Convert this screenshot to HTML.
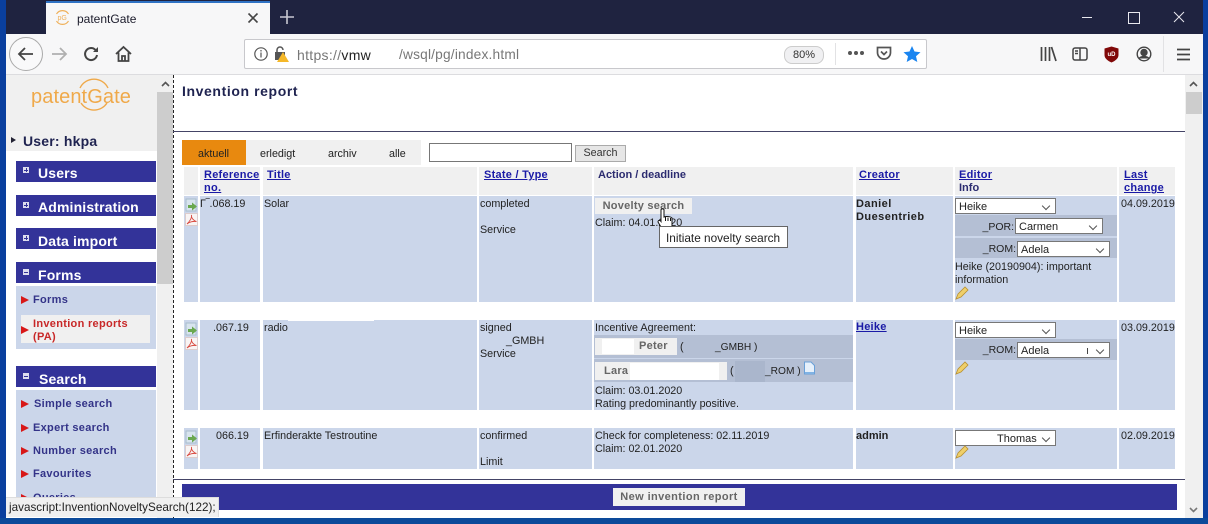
<!DOCTYPE html>
<html><head><meta charset="utf-8"><style>
html,body{margin:0;padding:0}
body{width:1208px;height:524px;overflow:hidden;position:relative;background:#fff;font-family:"Liberation Sans",sans-serif;font-size:10px;color:#222}
.a{position:absolute;white-space:nowrap}
.c{position:absolute;background:#cbd6ea}
.h{position:absolute;background:#f0f0f0;top:167px;height:28px}
a,.lk{color:#1a1aa6;text-decoration:underline;font-weight:bold;font-size:11px;line-height:13px;letter-spacing:.25px;margin-top:1px}
.th{color:#2c2c70;font-weight:bold;font-size:11px;line-height:13px;margin-top:1px}
.t{position:absolute;white-space:nowrap;font-size:10.75px;line-height:13px;color:#222;margin-top:1px}
.bar{position:absolute;left:16px;width:140px;height:21px;background:#333399;color:#fff;font-weight:bold;font-size:14px;line-height:14px;letter-spacing:.15px}
.bar span{position:absolute;left:22px;top:5px}
.bar i{position:absolute;left:7px;top:7px;width:6px;height:6px;background:#dde;display:block}
.bar i:after{content:"";position:absolute;left:1px;top:2.5px;width:4px;height:1px;background:#333399}
.bar i.p:before{content:"";position:absolute;left:2.5px;top:1px;width:1px;height:4px;background:#333399}
.m{position:absolute;font-size:11px;font-weight:bold;color:#333388;white-space:nowrap;letter-spacing:.3px;margin-top:1px}
.tri{position:absolute;left:21px;width:0;height:0;border-left:8px solid #d81818;border-top:4px solid transparent;border-bottom:4px solid transparent;margin-top:1px}
.sel{position:absolute;background:#fff;border:1px solid #777;box-sizing:border-box;height:16px;font-size:11px;line-height:16px;color:#222;padding-left:3px;white-space:nowrap}
.sel:after{content:"";position:absolute;right:6px;top:4px;width:5px;height:5px;border-right:1px solid #555;border-bottom:1px solid #555;transform:rotate(45deg)}
.g{position:absolute;background:#b4bfd4}
.btn{position:absolute;background:#f0f0f0;font-weight:bold;font-size:11px;color:#666;text-align:center;white-space:nowrap;letter-spacing:.25px}
</style></head><body>
<!-- window frame -->
<div class="a" style="left:0;top:0;width:1208px;height:524px;background:#0a3f9e"></div>
<div class="a" style="left:6px;top:0;width:1197px;height:34px;background:#1f2340"></div>
<div class="a" style="left:0;top:518px;width:1208px;height:6px;background:#0c4a9a"></div>
<!-- tab -->
<div class="a" style="left:46px;top:1px;width:224px;height:33px;background:#f7f7f8;border-top:2px solid #2f72c4;box-sizing:border-box"></div>
<svg class="a" style="left:54px;top:9px" width="17" height="17" viewBox="0 0 17 17" fill="none" stroke="#efb05a" stroke-width="1.2"><path d="M2.5 5A7 7 0 0 1 14.5 5M2.5 12A7 7 0 0 0 14.5 12"/><text x="3.5" y="11" font-size="7" font-family="Liberation Sans" fill="#efb05a" stroke="none">pG</text></svg>
<div class="a" style="left:77px;top:12px;font-size:12px;color:#1a1a2a">patentGate</div>
<svg class="a" style="left:247px;top:12px" width="12" height="12" stroke="#444" stroke-width="1.6"><path d="M1.5 1.5L10.5 10.5M10.5 1.5L1.5 10.5"/></svg>
<svg class="a" style="left:279px;top:9px" width="16" height="16" stroke="#c8c8d2" stroke-width="1.6"><path d="M8 1V15M1 8H15"/></svg>
<!-- window buttons -->
<div class="a" style="left:1082px;top:17px;width:10px;height:1px;background:#e8e8ee"></div>
<div class="a" style="left:1128px;top:12px;width:10px;height:10px;border:1px solid #e8e8ee"></div>
<svg class="a" style="left:1173px;top:11px" width="12" height="12" stroke="#e8e8ee" stroke-width="1"><path d="M1 1L11 11M11 1L1 11"/></svg>
<!-- toolbar -->
<div class="a" style="left:6px;top:34px;width:1197px;height:41px;background:#f7f7f8;border-bottom:1px solid #dcdcdf;box-sizing:border-box"></div>
<svg class="a" style="left:8px;top:36px" width="36" height="36" fill="none"><circle cx="18" cy="18" r="16.5" fill="#f9f9fa" stroke="#aaa"/><path d="M25 18H11M17 12L11 18L17 24" stroke="#444" stroke-width="1.8"/></svg>
<svg class="a" style="left:50px;top:46px" width="18" height="16" fill="none" stroke="#b0b0b0" stroke-width="1.8"><path d="M2 8H16M10 2L16 8L10 14"/></svg>
<svg class="a" style="left:83px;top:46px" width="17" height="16" fill="none" stroke="#444" stroke-width="2"><path d="M14 9A6 6 0 1 1 12 3.5L14.5 5.5"/><path d="M15 1V6H10" fill="#444" stroke="none"/></svg>
<svg class="a" style="left:115px;top:45px" width="17" height="18" fill="none" stroke="#444" stroke-width="1.8"><path d="M1 9L8.5 2L16 9M3.5 7.5V16H13.5V7.5M7 16V11H10V16"/></svg>
<!-- urlbar -->
<div class="a" style="left:244px;top:39px;width:683px;height:30px;background:#fff;border:1px solid #c8c8cc;border-radius:2px;box-sizing:border-box"></div>
<svg class="a" style="left:253px;top:46px" width="17" height="15" fill="none" stroke="#555" stroke-width="1.2"><circle cx="8" cy="8" r="6.2"/><path d="M8 6.5V11.5M8 4V5.5"/></svg>
<svg class="a" style="left:274px;top:46px" width="16" height="17"><rect x="1" y="6" width="10" height="8" fill="#555"/><path d="M3 6V4A3 3 0 0 1 9 4" fill="none" stroke="#555" stroke-width="1.5"/><path d="M9 6L15 16H3Z" fill="#f5b829"/></svg>
<div class="a" style="left:297px;top:47px;font-size:14px;color:#777;letter-spacing:.3px">https://<span style="color:#222">vmw</span></div>
<div class="a" style="left:399px;top:47px;font-size:13.7px;color:#777;letter-spacing:.2px">/wsql/pg/index.html</div>
<div class="a" style="left:784px;top:46px;width:38px;height:16px;border:1px solid #ccc;background:#f0f0f2;border-radius:8px;font-size:11px;line-height:16px;text-align:center;color:#333">80%</div>
<div class="a" style="left:835px;top:43px;width:1px;height:22px;background:#e2e2e4"></div>
<svg class="a" style="left:847px;top:50px" width="18" height="6" fill="#555"><circle cx="3" cy="3" r="2"/><circle cx="9" cy="3" r="2"/><circle cx="15" cy="3" r="2"/></svg>
<svg class="a" style="left:876px;top:46px" width="16" height="15" fill="none" stroke="#555" stroke-width="1.7"><path d="M1.5 1.5H14.5V6.5A6.5 6.5 0 0 1 1.5 6.5Z"/><path d="M5 5.5L8 8.5L11 5.5"/></svg>
<svg class="a" style="left:903px;top:45px" width="18" height="18" fill="#1a85f0"><path d="M9 1L11.5 6.5L17.5 7.2L13 11.2L14.3 17L9 14L3.7 17L5 11.2L.5 7.2L6.5 6.5Z"/></svg>
<svg class="a" style="left:1040px;top:46px" width="17" height="16" fill="none" stroke="#444" stroke-width="1.7"><path d="M1.5 1V15M5.5 1V15M9.5 1V15M11.5 1L16 15"/></svg>
<svg class="a" style="left:1072px;top:47px" width="16" height="14" fill="none" stroke="#444" stroke-width="1.5"><rect x="1" y="1" width="14" height="12" rx="2"/><path d="M8 1V13M3 4H6M3 6.5H6"/></svg>
<svg class="a" style="left:1104px;top:46px" width="15" height="17"><path d="M7.5 .5L14.5 2.5V9C14.5 12.5 11 15 7.5 16.5C4 15 .5 12.5 .5 9V2.5Z" fill="#800808"/><text x="7.5" y="10" font-size="6" font-weight="bold" font-family="Liberation Sans" text-anchor="middle" fill="#fff">uD</text></svg>
<svg class="a" style="left:1136px;top:46px" width="16" height="16" fill="none" stroke="#444" stroke-width="1.4"><circle cx="8" cy="8" r="6.8"/><circle cx="8" cy="6.5" r="3" fill="#444"/><path d="M3 12.5C5 10 11 10 13 12.5" fill="#444"/></svg>
<div class="a" style="left:1163px;top:36px;width:1px;height:36px;background:#e2e2e4"></div>
<svg class="a" style="left:1177px;top:48px" width="13" height="13" stroke="#444" stroke-width="1.7"><path d="M0 1.5H13M0 6.5H13M0 11.5H13"/></svg>
<!-- content background -->
<div class="a" style="left:6px;top:75px;width:1197px;height:443px;background:#fff"></div>
<!-- sidebar -->
<div class="a" style="left:6px;top:75px;width:151px;height:76px;background:#f0f0f0"></div>
<div class="a" style="left:157px;top:75px;width:16px;height:443px;background:#f0f0f0"></div>
<div class="a" style="left:157px;top:92px;width:16px;height:192px;background:#cdcdcd"></div>
<svg class="a" style="left:161px;top:81px" width="9" height="6" fill="none" stroke="#555" stroke-width="1.6"><path d="M1 5L4.5 1.5L8 5"/></svg>
<div class="a" style="left:173px;top:75px;width:0;height:443px;border-left:1px dashed #222"></div>
<div class="a" style="left:31px;top:86px;font-size:20px;line-height:22px;color:#efa94a;letter-spacing:.1px">patentGate</div>
<svg class="a" style="left:70px;top:78px" width="48" height="36" fill="none" stroke="#efa94a" stroke-width="1.4"><path d="M10 10A15.500 15.500 0 0 1 38 10M11 25A15.500 15.500 0 0 0 37 25"/></svg>
<div class="a" style="left:11px;top:137px;width:0;height:0;border-left:5px solid #223;border-top:3px solid transparent;border-bottom:3px solid transparent"></div>
<div class="a" style="left:23px;top:134px;font-size:14px;line-height:15px;font-weight:bold;color:#1f2350;letter-spacing:.2px">User: hkpa</div>
<div class="bar" style="top:161px"><i class="p" style="top:6px"></i><span>Users</span></div>
<div class="bar" style="top:195px"><i class="p"></i><span>Administration</span></div>
<div class="bar" style="top:228px"><i class="p"></i><span style="top:6px">Data import</span></div>
<div class="bar" style="top:262px"><i></i><span style="top:6px">Forms</span></div>
<div class="a" style="left:16px;top:286px;width:140px;height:63px;background:#cbd6ea"></div>
<div class="a" style="left:21px;top:315px;width:129px;height:28px;background:#f0f0f0"></div>
<div class="tri" style="top:295px"></div><div class="m" style="left:33px;top:293px">Forms</div>
<div class="tri" style="top:325px"></div><div class="m" style="left:33px;top:317px;line-height:13px;color:#c82828">Invention reports<br>(PA)</div>
<div class="bar" style="top:366px"><i></i><span style="left:23px;top:6px">Search</span></div>
<div class="a" style="left:16px;top:390px;width:140px;height:110px;background:#cbd6ea"></div>
<div class="tri" style="top:399px"></div><div class="m" style="left:34px;top:397px">Simple search</div>
<div class="tri" style="top:423px"></div><div class="m" style="left:33px;top:421px">Expert search</div>
<div class="tri" style="top:446px"></div><div class="m" style="left:33px;top:444px">Number search</div>
<div class="tri" style="top:469px"></div><div class="m" style="left:33px;top:467px">Favourites</div>
<div class="tri" style="top:493px"></div><div class="m" style="left:33px;top:491px">Queries</div>
<!-- main -->
<div class="a" style="left:182px;top:83px;font-size:14px;line-height:16px;font-weight:bold;color:#1f2350;letter-spacing:.6px">Invention report</div>
<div class="a" style="left:173px;top:131px;width:1012px;height:1px;background:#444466"></div>
<!-- tabs -->
<div class="a" style="left:246px;top:140px;width:175px;height:25px;background:#f0f0f0"></div>
<div class="a" style="left:182px;top:140px;width:64px;height:25px;background:#e8890f"></div>
<div class="t" style="left:198px;top:147px">aktuell</div>
<div class="t" style="left:260px;top:147px">erledigt</div>
<div class="t" style="left:328px;top:147px">archiv</div>
<div class="t" style="left:389px;top:147px">alle</div>
<div class="a" style="left:429px;top:143px;width:143px;height:19px;background:#fff;border:1px solid #777;box-sizing:border-box"></div>
<div class="a" style="left:575px;top:145px;width:51px;height:17px;background:#e6e6e6;border:1px solid #aaa;box-sizing:border-box;font-size:10.75px;line-height:15px;text-align:center;color:#333">Search</div>
<!-- header -->
<div class="h" style="left:184px;width:14px"></div>
<div class="h" style="left:200px;width:60px"></div>
<div class="h" style="left:263px;width:214px"></div>
<div class="h" style="left:479px;width:113px"></div>
<div class="h" style="left:594px;width:259px"></div>
<div class="h" style="left:856px;width:97px"></div>
<div class="h" style="left:955px;width:162px"></div>
<div class="h" style="left:1119px;width:56px"></div>
<a class="a" style="left:204px;top:168px">Reference<br>no.</a>
<a class="a" style="left:267px;top:168px">Title</a>
<a class="a" style="left:484px;top:168px">State / Type</a>
<div class="a th" style="left:598px;top:168px">Action / deadline</div>
<a class="a" style="left:859px;top:168px">Creator</a>
<a class="a" style="left:959px;top:168px">Editor</a>
<div class="a th" style="left:959px;top:181px">Info</div>
<a class="a" style="left:1124px;top:168px">Last<br>change</a>
<!-- row cells -->
<div class="c" style="left:184px;top:196px;width:14px;height:106px"></div>
<div class="c" style="left:200px;top:196px;width:60px;height:106px"></div>
<div class="c" style="left:263px;top:196px;width:214px;height:106px"></div>
<div class="c" style="left:479px;top:196px;width:113px;height:106px"></div>
<div class="c" style="left:594px;top:196px;width:259px;height:106px"></div>
<div class="c" style="left:856px;top:196px;width:97px;height:106px"></div>
<div class="c" style="left:955px;top:196px;width:162px;height:106px"></div>
<div class="c" style="left:1119px;top:196px;width:56px;height:106px"></div>

<div class="c" style="left:184px;top:320px;width:14px;height:90px"></div>
<div class="c" style="left:200px;top:320px;width:60px;height:90px"></div>
<div class="c" style="left:263px;top:320px;width:214px;height:90px"></div>
<div class="c" style="left:479px;top:320px;width:113px;height:90px"></div>
<div class="c" style="left:594px;top:320px;width:259px;height:90px"></div>
<div class="c" style="left:856px;top:320px;width:97px;height:90px"></div>
<div class="c" style="left:955px;top:320px;width:162px;height:90px"></div>
<div class="c" style="left:1119px;top:320px;width:56px;height:90px"></div>

<div class="c" style="left:184px;top:428px;width:14px;height:41px"></div>
<div class="c" style="left:200px;top:428px;width:60px;height:41px"></div>
<div class="c" style="left:263px;top:428px;width:214px;height:41px"></div>
<div class="c" style="left:479px;top:428px;width:113px;height:41px"></div>
<div class="c" style="left:594px;top:428px;width:259px;height:41px"></div>
<div class="c" style="left:856px;top:428px;width:97px;height:41px"></div>
<div class="c" style="left:955px;top:428px;width:162px;height:41px"></div>
<div class="c" style="left:1119px;top:428px;width:56px;height:41px"></div>

<!-- row icons -->
<svg class="a" style="left:185px;top:198px" width="13" height="30"><rect x="1" y="1" width="10" height="12" fill="#d8e4ee" stroke="#a8bccc"/><path d="M3 7H7V4.5L12 8.5L7 12.5V10H3Z" fill="#6aa84f"/><rect x=".5" y="15.5" width="12" height="12" fill="#f8f4f4" stroke="#dcc"/><path d="M2 26C5 23 7 20 6.5 17C6 20 9 23 11.5 23.5C8 23 4 24 2 26Z" fill="none" stroke="#d8483e" stroke-width=".9"/></svg>
<svg class="a" style="left:185px;top:322px" width="13" height="30"><rect x="1" y="1" width="10" height="12" fill="#d8e4ee" stroke="#a8bccc"/><path d="M3 7H7V4.5L12 8.5L7 12.5V10H3Z" fill="#6aa84f"/><rect x=".5" y="15.5" width="12" height="12" fill="#f8f4f4" stroke="#dcc"/><path d="M2 26C5 23 7 20 6.5 17C6 20 9 23 11.5 23.5C8 23 4 24 2 26Z" fill="none" stroke="#d8483e" stroke-width=".9"/></svg>
<svg class="a" style="left:185px;top:430px" width="13" height="30"><rect x="1" y="1" width="10" height="12" fill="#d8e4ee" stroke="#a8bccc"/><path d="M3 7H7V4.5L12 8.5L7 12.5V10H3Z" fill="#6aa84f"/><rect x=".5" y="15.5" width="12" height="12" fill="#f8f4f4" stroke="#dcc"/><path d="M2 26C5 23 7 20 6.5 17C6 20 9 23 11.5 23.5C8 23 4 24 2 26Z" fill="none" stroke="#d8483e" stroke-width=".9"/></svg>

<!-- row 1 -->
<div class="t" style="left:200px;top:197px">Γ‾.068.19</div>
<div class="t" style="left:264px;top:197px">Solar</div>
<div class="t" style="left:480px;top:197px">completed</div>
<div class="t" style="left:480px;top:223px">Service</div>
<div class="btn" style="left:595px;top:198px;width:97px;height:16px;line-height:16px">Novelty search</div>
<div class="t" style="left:595px;top:216px">Claim: 04.01.2020</div>
<div class="t" style="left:856px;top:197px;font-weight:bold;font-size:11px;color:#222;letter-spacing:.45px">Daniel<br>Duesentrieb</div>
<div class="sel" style="left:955px;top:198px;width:101px">Heike</div>
<div class="g" style="left:955px;top:215px;width:162px;height:21px"></div>
<div class="t" style="left:923px;top:220px;width:91px;text-align:right;font-size:10.5px">_POR:</div>
<div class="sel" style="left:1015px;top:218px;width:88px">Carmen</div>
<div class="g" style="left:955px;top:238px;width:162px;height:20px"></div>
<div class="t" style="left:923px;top:242px;width:93px;text-align:right;font-size:10.5px">_ROM:</div>
<div class="sel" style="left:1017px;top:241px;width:93px">Adela</div>
<div class="t" style="left:955px;top:260px">Heike (20190904): important<br>information</div>
<svg class="a" style="left:955px;top:286px" width="14" height="14"><path d="M1 13L3 8L10 1L13 4L6 11Z" fill="#efcf6a" stroke="#b89030" stroke-width=".8"/></svg>
<div class="t" style="left:1121px;top:197px">04.09.2019</div>

<!-- row 2 -->
<div class="a" style="left:288px;top:318px;width:86px;height:3px;background:#fff"></div>
<div class="t" style="left:213px;top:321px">.067.19</div>
<div class="t" style="left:264px;top:321px">radio</div>
<div class="t" style="left:480px;top:321px;line-height:13px">signed<br><span style="padding-left:26px">_GMBH</span><br>Service</div>
<div class="t" style="left:595px;top:321px">Incentive Agreement:</div>
<div class="g" style="left:594px;top:335px;width:259px;height:23px"></div>
<div class="btn" style="left:595px;top:338px;width:82px;height:17px;line-height:17px;padding-left:44px;box-sizing:border-box;text-align:left">Peter</div>
<div class="a" style="left:602px;top:339px;width:32px;height:15px;background:#fff"></div>
<div class="t" style="left:680px;top:340px">(</div>
<div class="t" style="left:715px;top:340px;font-size:10.2px">_GMBH )</div>
<div class="g" style="left:594px;top:359px;width:259px;height:23px"></div>
<div class="btn" style="left:595px;top:362px;width:132px;height:18px;line-height:18px;padding-left:9px;box-sizing:border-box;text-align:left">Lara</div>
<div class="a" style="left:630px;top:363px;width:89px;height:17px;background:#fff"></div>
<div class="a" style="left:735px;top:361px;width:30px;height:21px;background:#aab6cc"></div>
<div class="t" style="left:730px;top:364px">(</div>
<div class="t" style="left:765px;top:364px;font-size:10.2px">_ROM )</div>
<svg class="a" style="left:803px;top:361px" width="13" height="14"><path d="M1.500 1H8L11.500 4.500V13H1.500Z" fill="#e6f0fb" stroke="#6aa0d8"/><path d="M2 11H11V13H2Z" fill="#7fb2e4"/></svg>
<div class="t" style="left:595px;top:384px">Claim: 03.01.2020<br>Rating predominantly positive.</div>
<a class="a" style="left:856px;top:320px">Heike</a>
<div class="sel" style="left:955px;top:322px;width:101px">Heike</div>
<div class="g" style="left:955px;top:339px;width:162px;height:21px"></div>
<div class="t" style="left:923px;top:343px;width:93px;text-align:right;font-size:10.5px">_ROM:</div>
<div class="sel" style="left:1017px;top:342px;width:93px">Adela</div>
<div class="a" style="left:1087px;top:348px;width:1px;height:6px;background:#444"></div>
<svg class="a" style="left:955px;top:361px" width="14" height="14"><path d="M1 13L3 8L10 1L13 4L6 11Z" fill="#efcf6a" stroke="#b89030" stroke-width=".8"/></svg>
<div class="t" style="left:1121px;top:321px">03.09.2019</div>

<!-- row 3 -->
<div class="t" style="left:216px;top:429px">066.19</div>
<div class="t" style="left:264px;top:429px">Erfinderakte Testroutine</div>
<div class="t" style="left:480px;top:429px">confirmed</div>
<div class="t" style="left:480px;top:455px">Limit</div>
<div class="t" style="left:595px;top:429px">Check for completeness: 02.11.2019<br>Claim: 02.01.2020</div>
<div class="t" style="left:856px;top:429px;font-weight:bold;font-size:11px">admin</div>
<div class="sel" style="left:955px;top:430px;width:101px;padding-left:41px">Thomas</div>
<svg class="a" style="left:955px;top:445px" width="14" height="14"><path d="M1 13L3 8L10 1L13 4L6 11Z" fill="#efcf6a" stroke="#b89030" stroke-width=".8"/></svg>
<div class="t" style="left:1121px;top:429px">02.09.2019</div>

<!-- footer -->
<div class="a" style="left:173px;top:479px;width:1012px;height:1px;background:#444466"></div>
<div class="a" style="left:182px;top:484px;width:995px;height:26px;background:#333399"></div>
<div class="btn" style="left:613px;top:488px;width:132px;height:18px;line-height:18px;letter-spacing:.4px">New invention report</div>
<!-- hand cursor -->
<svg class="a" style="left:657px;top:208px" width="17" height="24"><path d="M4 2C4 .5 7 .5 7 2V9C9 8 14 8.500 15 10V18C15 21 13 23 10 23C7 23 6 22 4 19L1 14C1 12 3 12 4 13.500Z" fill="#fff" stroke="#111"/><path d="M8.500 9V13M11 9.500V13M13.500 10V13" stroke="#111"/></svg>
<!-- tooltip -->
<div class="a" style="left:659px;top:226px;width:129px;height:22px;background:#fff;border:1px solid #666;box-sizing:border-box;font-size:11.8px;line-height:22px;padding-left:6px;color:#222">Initiate novelty search</div>
<!-- right scrollbar -->
<div class="a" style="left:1185px;top:75px;width:18px;height:443px;background:#f0f0f0"></div>
<div class="a" style="left:1186px;top:92px;width:16px;height:22px;background:#cdcdcd"></div>
<svg class="a" style="left:1189px;top:81px" width="9" height="6" fill="none" stroke="#555" stroke-width="1.6"><path d="M1 5L4.500 1.500L8 5"/></svg>
<svg class="a" style="left:1189px;top:507px" width="9" height="6" fill="none" stroke="#777" stroke-width="1.600"><path d="M1 1L4.500 4.500L8 1"/></svg>
<!-- status -->
<div class="a" style="left:6px;top:497px;width:213px;height:20px;background:#f0f0f0;border-top:1px solid #ddd;border-right:1px solid #ddd;box-sizing:border-box;font-size:11.7px;line-height:20px;padding-left:3px;color:#222">javascript:InventionNoveltySearch(122);</div>
</body></html>
